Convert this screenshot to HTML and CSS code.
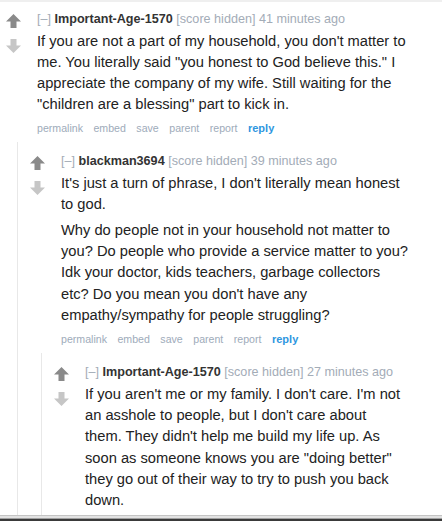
FILE: index.html
```
<!DOCTYPE html>
<html>
<head>
<meta charset="utf-8">
<link rel="stylesheet" href="styles.css">
</head>
<body>
<div class="sitetable">
  <div class="comment top">
    <div class="midcol">
      <svg class="arrow up" viewBox="0 0 15 14"><polygon points="7.5,0 15,7.5 10.5,7.5 10.5,14 4.5,14 4.5,7.5 0,7.5"/></svg>
      <svg class="arrow down" viewBox="0 0 15 14"><polygon points="4.5,0 10.5,0 10.5,6.5 15,6.5 7.5,14 0,6.5 4.5,6.5"/></svg>
    </div>
    <div class="entry">
      <p class="tagline"><span class="expand">[–]</span> <span class="author">Important-Age-1570</span> <span class="score">[score hidden]</span> <span class="time">41 minutes ago</span></p>
      <div class="md">
        <p>If you are not a part of my household, you don't matter to me. You literally said "you honest to God believe this." I appreciate the company of my wife. Still waiting for the "children are a blessing" part to kick in.</p>
      </div>
      <ul class="buttons"><li>permalink</li><li>embed</li><li>save</li><li>parent</li><li>report</li><li class="reply">reply</li></ul>
    </div>
  </div>
  <div class="child">
    <div class="comment">
      <div class="midcol">
        <svg class="arrow up" viewBox="0 0 15 14"><polygon points="7.5,0 15,7.5 10.5,7.5 10.5,14 4.5,14 4.5,7.5 0,7.5"/></svg>
        <svg class="arrow down" viewBox="0 0 15 14"><polygon points="4.5,0 10.5,0 10.5,6.5 15,6.5 7.5,14 0,6.5 4.5,6.5"/></svg>
      </div>
      <div class="entry">
        <p class="tagline"><span class="expand">[–]</span> <span class="author">blackman3694</span> <span class="score">[score hidden]</span> <span class="time">39 minutes ago</span></p>
        <div class="md">
          <p>It's just a turn of phrase, I don't literally mean honest to god.</p>
          <p>Why do people not in your household not matter to you? Do people who provide a service matter to you? Idk your doctor, kids teachers, garbage collectors etc? Do you mean you don't have any empathy/sympathy for people struggling?</p>
        </div>
        <ul class="buttons"><li>permalink</li><li>embed</li><li>save</li><li>parent</li><li>report</li><li class="reply">reply</li></ul>
      </div>
    </div>
    <div class="child">
      <div class="comment">
        <div class="midcol">
          <svg class="arrow up" viewBox="0 0 15 14"><polygon points="7.5,0 15,7.5 10.5,7.5 10.5,14 4.5,14 4.5,7.5 0,7.5"/></svg>
          <svg class="arrow down" viewBox="0 0 15 14"><polygon points="4.5,0 10.5,0 10.5,6.5 15,6.5 7.5,14 0,6.5 4.5,6.5"/></svg>
        </div>
        <div class="entry">
          <p class="tagline"><span class="expand">[–]</span> <span class="author">Important-Age-1570</span> <span class="score">[score hidden]</span> <span class="time">27 minutes ago</span></p>
          <div class="md">
            <p>If you aren't me or my family. I don't care. I'm not an asshole to people, but I don't care about them. They didn't help me build my life up. As soon as someone knows you are "doing better" they go out of their way to try to push you back down.</p>
          </div>
        </div>
      </div>
    </div>
  </div>
</div>
<div class="frame-bottom"></div>
</body>
</html>
```

FILE: styles.css
```
html, body {
  margin: 0;
  padding: 0;
  background: #ffffff;
  height: 100%;
  overflow: hidden;
}
body {
  font-family: "Liberation Sans", Arial, sans-serif;
  color: #222222;
  border-top: 2px solid #efefef;
  box-sizing: border-box;
}
.sitetable {
  padding-left: 6px;
  padding-right: 29.5px;
  height: 100%;
  box-sizing: border-box;
}
.comment {
  display: flex;
  padding-top: 11px;
}
.comment.top {
  padding-top: 8.5px;
}
.child {
  margin-left: 11px;
  margin-right: 4px;
  border-left: 1px solid #e8e8e8;
  padding-left: 12px;
  min-height: 100%;
}
.midcol {
  width: 15px;
  flex: none;
  margin-right: 16px;
  padding-top: 3px;
  display: flex;
  flex-direction: column;
  gap: 11px;
}
.arrow {
  width: 15px;
  height: 14px;
  display: block;
}
.arrow.up { fill: #8a8a8a; }
.arrow.down { fill: #c6c6c6; }
.entry {
  flex: 1;
  min-width: 0;
  padding-bottom: 7px;
}
.tagline {
  margin: 0 0 4px;
  font-size: 12.6px;
  line-height: 16px;
  color: #a3acb7;
  white-space: nowrap;
}
.tagline .author {
  font-weight: bold;
  color: #333333;
}
.md {
  font-size: 14.7px;
  line-height: 21.3px;
  color: #222222;
}
.md p {
  margin: 0 0 4px;
}
.md p:last-child {
  margin-bottom: 0;
}
.buttons {
  list-style: none;
  margin: 5.5px 0 0;
  padding: 0;
  display: flex;
  gap: 10.5px;
  font-size: 10.6px;
  line-height: 14px;
  color: #9eabba;
}
.buttons .reply {
  font-weight: bold;
  color: #2f97e0;
  font-size: 11px;
}
.frame-bottom {
  position: fixed;
  left: 0;
  right: 0;
  bottom: 0;
  height: 6px;
  background: linear-gradient(to bottom, #c4c4c4 0, #c4c4c4 1px, #e2e2e2 1px, #e2e2e2 3px, #a0a0a0 3px, #a0a0a0 4px, #3a3a3a 4px, #3a3a3a 6px);
}
```
